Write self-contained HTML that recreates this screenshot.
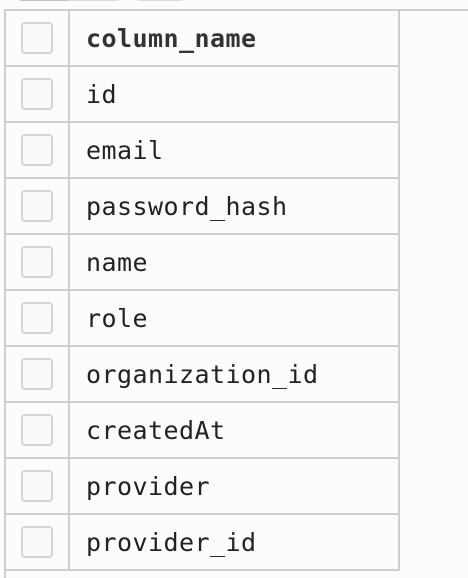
<!DOCTYPE html>
<html><head><style>
body{margin:0;width:468px;height:578px;background:#fcfcfc;position:relative;overflow:hidden;font-family:"DejaVu Sans Mono","Liberation Mono",monospace;}
.pill{position:absolute;top:-8px;height:9px;border-radius:5px;background:#ddd;}
.top{position:absolute;left:5px;right:0;top:9px;height:2px;background:#cfcfcf;}
.lb{position:absolute;left:4px;top:9px;width:2px;height:569px;background:#cfcfcf;}
table{position:absolute;left:4px;top:9px;border-collapse:collapse;}
td{border:2px solid #cfcfcf;height:54px;padding:0;}
td.c{width:62px;}
td.n{width:312px;padding-left:16px;font-size:25px;letter-spacing:0.45px;color:#222;}
.b{border:2px solid #d4d4d4;border-radius:4px;background:#fafafa;margin-left:15px;box-sizing:border-box;width:32px;height:32px;}
tr:first-child td.n{font-weight:bold;color:#333;}
</style></head><body>
<div class="pill" style="left:17px;width:104px;background:linear-gradient(90deg,#bfc4c4 0 52px,#ddd 52px)"></div>
<div class="pill" style="left:135px;width:50px"></div>
<div class="top"></div><div class="lb"></div>
<table>
<tr><td class="c"><div class="b"></div></td><td class="n">column_name</td></tr>
<tr><td class="c"><div class="b"></div></td><td class="n">id</td></tr>
<tr><td class="c"><div class="b"></div></td><td class="n">email</td></tr>
<tr><td class="c"><div class="b"></div></td><td class="n">password_hash</td></tr>
<tr><td class="c"><div class="b"></div></td><td class="n">name</td></tr>
<tr><td class="c"><div class="b"></div></td><td class="n">role</td></tr>
<tr><td class="c"><div class="b"></div></td><td class="n">organization_id</td></tr>
<tr><td class="c"><div class="b"></div></td><td class="n">createdAt</td></tr>
<tr><td class="c"><div class="b"></div></td><td class="n">provider</td></tr>
<tr><td class="c"><div class="b"></div></td><td class="n">provider_id</td></tr>
</table>
</body></html>
